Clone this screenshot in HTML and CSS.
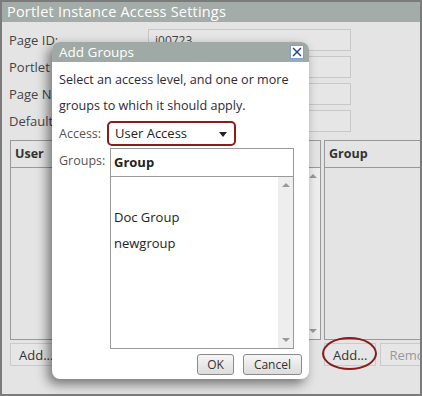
FILE: index.html
```html
<!DOCTYPE html>
<html lang="en">
<head>
    <meta charset="UTF-8">
    <title>Portlet Instance Access Settings</title>
    <link rel="stylesheet" href="styles.css">
</head>
<body>
    <div class="window">
        <div class="win-title">Portlet Instance Access Settings</div>

        <div class="fields">
            <label>Page ID:</label><input type="text" value="i00723">
            <label>Portlet ID:</label><input type="text">
            <label>Page Name:</label><input type="text">
            <label>Default Access:</label><input type="text">
        </div>

        <div class="panels">
            <div class="side users">
                <div class="panel">
                    <div class="panel-head">User</div>
                    <div class="panel-rows">
                        <div class="vscroll"><span class="up"></span><span class="down"></span></div>
                    </div>
                </div>
                <div class="actions">
                    <button class="btn">Add...</button>
                    <button class="btn">Remove</button>
                </div>
            </div>
            <div class="side groups">
                <div class="panel">
                    <div class="panel-head">Group</div>
                    <div class="panel-rows"></div>
                </div>
                <div class="actions">
                    <button class="btn">Add...</button>
                    <button class="btn dim">Remove</button>
                </div>
            </div>
        </div>

        <span class="callout"></span>

        <div class="dialog">
            <div class="dialog-title">
                <span>Add Groups</span>
                <span class="close">
                    <svg width="10" height="10" viewBox="0 0 10 10"><path d="M1 1L9 9M9 1L1 9" stroke="#1f3f8f" stroke-width="1.4"/></svg>
                </span>
            </div>
            <div class="dialog-body">
                <p class="intro">Select an access level, and one or more groups to which it should apply.</p>
                <div class="row">
                    <span class="row-label">Access:</span>
                    <div class="select">User Access <span class="caret"></span></div>
                </div>
                <div class="row">
                    <span class="row-label">Groups:</span>
                    <div class="listbox">
                        <div class="list-head">Group</div>
                        <div class="list-body">
                            <ul class="items">
                                <li>&nbsp;</li>
                                <li>Doc Group</li>
                                <li>newgroup</li>
                            </ul>
                            <div class="vscroll"><span class="up"></span><span class="down"></span></div>
                        </div>
                    </div>
                </div>
                <div class="buttons">
                    <button class="btn raised ok">OK</button>
                    <button class="btn raised">Cancel</button>
                </div>
            </div>
        </div>
    </div>
</body>
</html>
```

FILE: styles.css
```css
body {
    margin: 0;
    font-family: "Open Sans", "Noto Sans", sans-serif;
    font-size: 13px;
    color: #333;
}
.window {
    position: relative;
    width: 422px;
    height: 396px;
    box-sizing: border-box;
    border: 2px solid #7b7b7b;
    background-color: #e4e4e4;
    overflow: hidden;
}
.win-title {
    height: 20px;
    line-height: 20px;
    padding-left: 5px;
    background-color: #a3aca9;
    color: #fff;
    font-size: 14.5px;
    letter-spacing: 0.2px;
}
.fields {
    display: grid;
    grid-template-columns: 139px 203px;
    grid-auto-rows: 22px;
    row-gap: 5px;
    padding: 7px 0 0 7px;
    align-items: center;
}
.fields label {
    color: #444;
    white-space: nowrap;
    overflow: hidden;
}
.fields input {
    box-sizing: border-box;
    height: 22px;
    border: 1px solid #c8c8c8;
    background-color: #e6e6e6;
    font: inherit;
    font-size: 12px;
    color: #444;
    padding: 0 6px;
}
.panels {
    display: flex;
    gap: 3px;
    margin-top: 8px;
    padding-left: 8px;
}
.side {
    display: flex;
    flex-direction: column;
    gap: 3px;
}
.users { width: 311px; flex-shrink: 0; }
.groups { width: 120px; flex-shrink: 0; }
.panel {
    height: 200px;
    box-sizing: border-box;
    border: 1px solid #999;
    display: flex;
    flex-direction: column;
}
.panel-head {
    height: 26px;
    line-height: 26px;
    padding-left: 4px;
    border-bottom: 1px solid #999;
    font-weight: bold;
    font-size: 12.5px;
    color: #333;
}
.panel-rows {
    flex: 1;
    display: flex;
    justify-content: flex-end;
}
.actions {
    display: flex;
    gap: 4px;
}
.btn {
    height: 23px;
    padding: 0 8px;
    border: 1px solid #cacaca;
    background-color: #e6e6e6;
    font: inherit;
    font-size: 13px;
    color: #333;
}
.btn.dim { color: #999; }
.vscroll {
    width: 15px;
    background-color: #eee;
    display: flex;
    flex-direction: column;
    justify-content: space-between;
    align-items: center;
    padding: 6px 0;
    box-sizing: border-box;
}
.vscroll .up,
.vscroll .down {
    width: 0;
    height: 0;
    border-left: 4px solid transparent;
    border-right: 4px solid transparent;
}
.vscroll .up { border-bottom: 4px solid #999; }
.vscroll .down { border-top: 4px solid #999; }
.callout {
    position: absolute;
    left: 320px;
    top: 335px;
    width: 51px;
    height: 29px;
    border: 2px solid #8b1c1c;
    border-radius: 50%;
}
.dialog {
    position: absolute;
    left: 50px;
    top: 40px;
    width: 257px;
    height: 337px;
    background-color: #fff;
    border-radius: 8px;
    overflow: hidden;
    box-shadow: -4px 5px 12px rgba(0, 0, 0, 0.5);
}
.dialog-title {
    height: 20px;
    line-height: 20px;
    padding: 0 5px 0 7px;
    background-color: #9fa9a5;
    color: #fff;
    font-size: 13.5px;
    display: flex;
    justify-content: space-between;
    align-items: center;
}
.close {
    width: 12px;
    height: 12px;
    border: 1px solid #7fa0d8;
    background-color: #fff;
    display: flex;
    align-items: center;
    justify-content: center;
}
.close svg { display: block; }
.dialog-body {
    padding: 5px 7px 0 7px;
    color: #2a2a38;
}
.intro {
    margin: 0;
    line-height: 26px;
    font-size: 12.6px;
}
.row {
    display: flex;
    margin-top: 2px;
}
.row-label {
    width: 48px;
    color: #555;
    line-height: 25px;
    font-size: 12.5px;
}
.select {
    box-sizing: border-box;
    width: 129px;
    height: 25px;
    line-height: 21px;
    border: 2px solid #8b1c1c;
    border-radius: 5px;
    padding: 0 6px;
    font-size: 13px;
    color: #222;
    position: relative;
}
.caret {
    position: absolute;
    right: 7px;
    top: 9px;
    border-left: 4px solid transparent;
    border-right: 4px solid transparent;
    border-top: 5px solid #222;
}
.listbox {
    margin-left: 3px;
    width: 184px;
    height: 201px;
    box-sizing: border-box;
    border: 1px solid #999;
    display: flex;
    flex-direction: column;
}
.list-head {
    height: 27px;
    line-height: 27px;
    padding-left: 3px;
    border-bottom: 1px solid #999;
    font-weight: bold;
    font-size: 13px;
    color: #222;
}
.list-body {
    flex: 1;
    display: flex;
}
.items {
    flex: 1;
    list-style: none;
    margin: 0;
    padding: 1px 0 0 3px;
}
.items li {
    line-height: 26px;
    font-size: 13px;
    color: #222;
}
.buttons {
    display: flex;
    justify-content: flex-end;
    gap: 9px;
    margin-top: 5px;
}
.btn.raised {
    height: 21px;
    padding: 0 10px;
    border: 1px solid #8a8a8a;
    border-radius: 3px;
    background: linear-gradient(#f6f6f6, #dcdcdc);
    font-size: 12px;
}
.btn.ok { padding: 0 9px; }
```
